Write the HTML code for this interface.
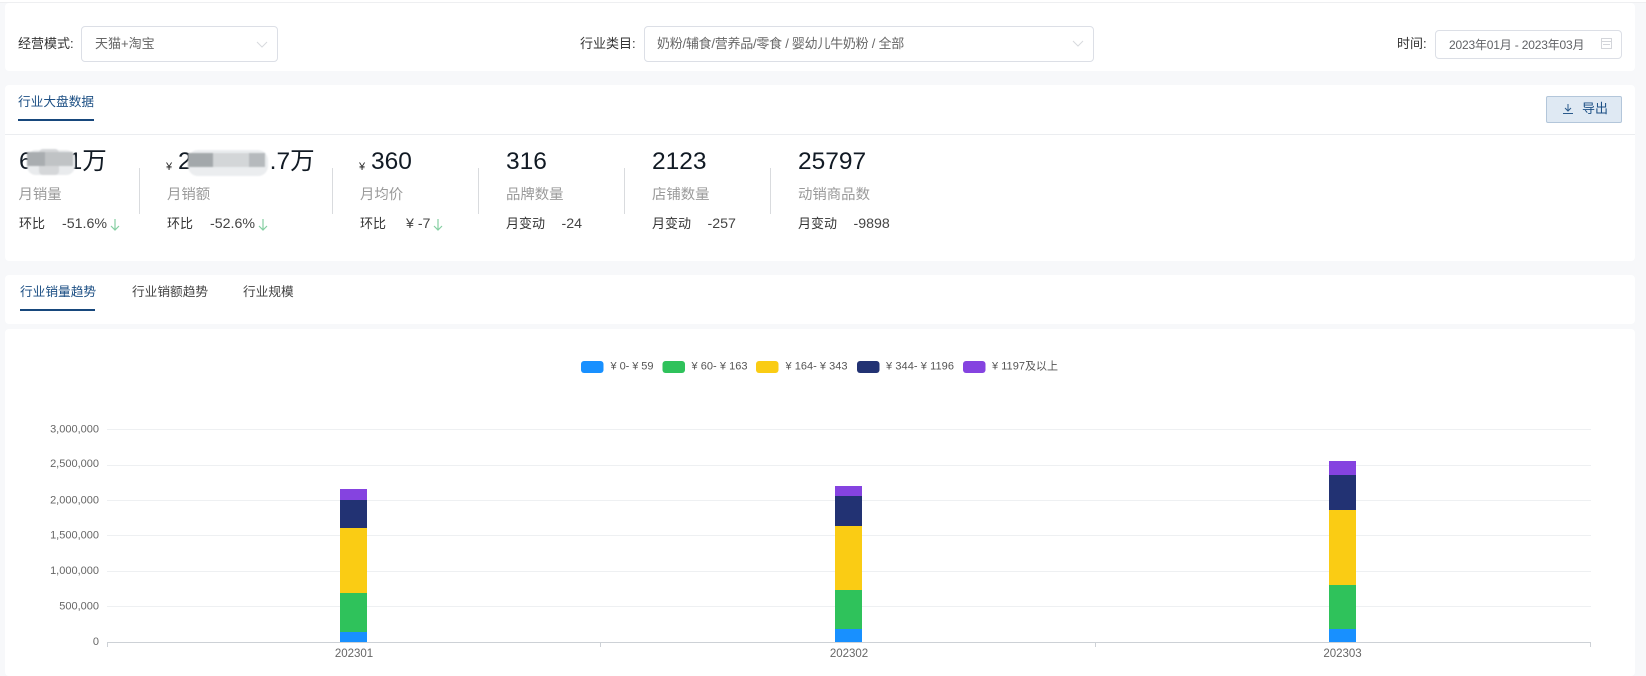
<!DOCTYPE html>
<html lang="zh"><head><meta charset="utf-8"><title>行业大盘数据</title>
<style>
html,body{margin:0;padding:0;background:#f7f8fa;}
body{width:1646px;height:676px;position:relative;overflow:hidden;font-family:"Liberation Sans","Noto Sans CJK SC",sans-serif;color:#333;}
.a{position:absolute;white-space:nowrap;}
.card{position:absolute;background:#fff;border-radius:4px;}
.t{line-height:20px;font-size:12.7px;}
.box{position:absolute;background:#fff;border:1px solid #dcdfe6;border-radius:4px;box-sizing:border-box;}
.num{position:absolute;font-size:24.5px;line-height:30px;color:#111a24;white-space:nowrap;}
.lab{position:absolute;font-size:14.4px;line-height:20px;color:#9a9a9a;white-space:nowrap;}
.sm{position:absolute;font-size:13px;line-height:20px;color:#333;white-space:nowrap;}
.val{position:absolute;font-size:14.2px;line-height:20px;color:#444;white-space:nowrap;}
.div{position:absolute;top:168px;width:1px;height:46px;background:#d9dbde;}
.yen{position:absolute;font-size:11px;line-height:14px;color:#222;}
.blk{position:absolute;}
.mosaic{position:absolute;filter:blur(.7px);}
</style></head><body>
<div class="a" style="left:0;top:0;width:1646px;height:3px;background:#fff;border-bottom:1px solid #eeeff1;box-sizing:border-box"></div>

<div class="card" style="left:5px;top:3px;width:1630px;height:68px"></div>
<div class="card" style="left:5px;top:85px;width:1630px;height:176px"></div>
<div class="card" style="left:5px;top:275px;width:1630px;height:49px"></div>
<div class="card" style="left:5px;top:329px;width:1630px;height:347px"></div>

<!-- filters -->
<div class="a t" style="left:18px;top:34px;color:#333;font-size:13px">经营模式:</div>
<div class="box" style="left:81px;top:26px;width:197px;height:36px"></div>
<div class="a t" style="left:95px;top:34px;color:#666;font-size:13px">天猫+淘宝</div>
<svg class="a" style="left:255px;top:40px" width="14" height="9" viewBox="0 0 14 9"><path d="M2 2l5 5 5-5" fill="none" stroke="#d8dade" stroke-width="1"/></svg>

<div class="a t" style="left:580px;top:34px;color:#333;font-size:13px">行业类目:</div>
<div class="box" style="left:644px;top:26px;width:450px;height:36px"></div>
<div class="a t" style="left:657px;top:34px;color:#666;font-size:13px;letter-spacing:-.25px">奶粉/辅食/营养品/零食 / 婴幼儿牛奶粉 / 全部</div>
<svg class="a" style="left:1071px;top:39px" width="14" height="9" viewBox="0 0 14 9"><path d="M2 2l5 5 5-5" fill="none" stroke="#d8dade" stroke-width="1"/></svg>

<div class="a t" style="left:1397px;top:34px;color:#333;font-size:13px">时间:</div>
<div class="box" style="left:1435px;top:30px;width:187px;height:29px"></div>
<div class="a" style="left:1449px;top:35px;font-size:12px;line-height:20px;color:#606266;letter-spacing:-.18px">2023年01月 - 2023年03月</div>
<svg class="a" style="left:1600px;top:37px" width="13" height="13" viewBox="0 0 13 13"><path d="M1.500 1.500h10v10h-10zM1.500 4.500h10M3 7.500h7" fill="none" stroke="#d3d5da" stroke-width="1"/></svg>

<!-- section 2 -->
<div class="a t" style="left:18px;top:92px;color:#1c4f84">行业大盘数据</div>
<div class="a" style="left:18px;top:119px;width:76px;height:2px;background:#17477c"></div>
<div class="a" style="left:5px;top:134px;width:1630px;height:1px;background:#ebedf0"></div>
<div class="a" style="left:1546px;top:96px;width:76px;height:27px;box-sizing:border-box;background:#dfe9f3;border:1px solid #b3c6da;border-radius:2px"></div>
<svg class="a" style="left:1562px;top:103px" width="12" height="12" viewBox="0 0 12 12"><path d="M6 1v6.500M3 5l3 3 3-3M1 10.500h10" fill="none" stroke="#2a5a8c" stroke-width="1"/></svg>
<div class="a t" style="left:1582px;top:99px;color:#1c4f84;font-size:13px">导出</div>

<!-- stats -->
<div class="num" style="left:19px;top:147px">6<span style="margin-left:36px">1万</span></div>
<div class="mosaic" style="left:27px;top:149px;width:48px;height:26px">
<div class="blk" style="left:0;top:1px;width:48px;height:25px;background:#e9ebed;border-radius:9px"></div>
<div class="blk" style="left:12px;top:0;width:20px;height:26px;background:#d5d7d9;border-radius:4px"></div>
<div class="blk" style="left:0;top:3px;width:18px;height:14px;background:#a9adb0"></div>
<div class="blk" style="left:18px;top:3px;width:28px;height:14px;background:#c0c3c5"></div>
</div>
<div class="lab" style="left:18.500px;top:185px">月销量</div>
<div class="sm" style="left:19px;top:214px">环比</div>
<div class="val" style="left:62px;top:214px">-51.6%</div>
<svg class="a" style="left:109px;top:218px" width="12" height="14" viewBox="0 0 12 14"><path d="M6 1v11M2 8l4 4 4-4" fill="none" stroke="#85cfa2" stroke-width="1.200"/></svg>
<div class="div" style="left:139px"></div>

<div class="yen" style="left:166px;top:160px">¥</div>
<div class="num" style="left:178px;top:147px">2<span style="margin-left:78px">.7万</span></div>
<div class="mosaic" style="left:188px;top:150px;width:80px;height:26px">
<div class="blk" style="left:0;top:0;width:80px;height:26px;background:#ebedef;border-radius:10px"></div>
<div class="blk" style="left:0;top:3px;width:25px;height:14px;background:#a3a8ab"></div>
<div class="blk" style="left:25px;top:3px;width:37px;height:14px;background:#d3d6d8"></div>
<div class="blk" style="left:61px;top:3px;width:16px;height:14px;background:#b6babd"></div>
</div>
<div class="lab" style="left:167px;top:185px">月销额</div>
<div class="sm" style="left:167px;top:214px">环比</div>
<div class="val" style="left:210px;top:214px">-52.6%</div>
<svg class="a" style="left:257px;top:218px" width="12" height="14" viewBox="0 0 12 14"><path d="M6 1v11M2 8l4 4 4-4" fill="none" stroke="#85cfa2" stroke-width="1.200"/></svg>
<div class="div" style="left:332px"></div>

<div class="yen" style="left:359px;top:160px">¥</div>
<div class="num" style="left:371px;top:147px">360</div>
<div class="lab" style="left:360px;top:185px">月均价</div>
<div class="sm" style="left:360px;top:214px">环比</div>
<div class="val" style="left:406px;top:214px">¥ -7</div>
<svg class="a" style="left:432px;top:218px" width="12" height="14" viewBox="0 0 12 14"><path d="M6 1v11M2 8l4 4 4-4" fill="none" stroke="#85cfa2" stroke-width="1.200"/></svg>
<div class="div" style="left:478px"></div>

<div class="num" style="left:506px;top:147px">316</div>
<div class="lab" style="left:506px;top:185px">品牌数量</div>
<div class="sm" style="left:506px;top:214px">月变动</div>
<div class="val" style="left:561.500px;top:214px">-24</div>
<div class="div" style="left:624px"></div>

<div class="num" style="left:652px;top:147px">2123</div>
<div class="lab" style="left:652px;top:185px">店铺数量</div>
<div class="sm" style="left:652px;top:214px">月变动</div>
<div class="val" style="left:707.500px;top:214px">-257</div>
<div class="div" style="left:770px"></div>

<div class="num" style="left:798px;top:147px">25797</div>
<div class="lab" style="left:798px;top:185px">动销商品数</div>
<div class="sm" style="left:798px;top:214px">月变动</div>
<div class="val" style="left:853.500px;top:214px">-9898</div>

<!-- tabs -->
<div class="a t" style="left:20px;top:282px;color:#1c4f84">行业销量趋势</div>
<div class="a" style="left:20px;top:309px;width:75px;height:2px;background:#17477c"></div>
<div class="a t" style="left:132px;top:282px;color:#444">行业销额趋势</div>
<div class="a t" style="left:243px;top:282px;color:#444">行业规模</div>

<!-- chart -->
<svg class="a" style="left:0;top:329px" width="1646" height="347" viewBox="0 329 1646 347" font-family="Liberation Sans, Noto Sans CJK SC, sans-serif" font-size="11" fill="#666">
<g fill="none" stroke="#eef0f2" stroke-width="1">
<path d="M107 429.500H1591M107 465.500H1591M107 500.500H1591M107 535.500H1591M107 571.500H1591M107 606.500H1591"/>
</g>
<path d="M107 642.500H1591M107.500 642v5M600.500 642v5M1095.500 642v5M1590.500 642v5" fill="none" stroke="#cdd1d6" stroke-width="1"/>
<g text-anchor="end">
<text x="99" y="432.500">3,000,000</text><text x="99" y="467">2,500,000</text><text x="99" y="503.500">2,000,000</text><text x="99" y="538.500">1,500,000</text><text x="99" y="574">1,000,000</text><text x="99" y="609.500">500,000</text><text x="99" y="645">0</text>
</g>
<g text-anchor="middle" font-size="11.500">
<text x="354" y="657">202301</text><text x="849" y="657">202302</text><text x="1342.500" y="657">202303</text>
</g>
<g>
<rect x="340" y="489" width="27" height="11" fill="#8543e0"/><rect x="340" y="500" width="27" height="28" fill="#223273"/><rect x="340" y="528" width="27" height="65" fill="#facc14"/><rect x="340" y="593" width="27" height="39" fill="#2fc25b"/><rect x="340" y="632" width="27" height="10" fill="#1890ff"/>
<rect x="835" y="486" width="27" height="10" fill="#8543e0"/><rect x="835" y="496" width="27" height="30" fill="#223273"/><rect x="835" y="526" width="27" height="64" fill="#facc14"/><rect x="835" y="590" width="27" height="39" fill="#2fc25b"/><rect x="835" y="629" width="27" height="13" fill="#1890ff"/>
<rect x="1329" y="461" width="27" height="14" fill="#8543e0"/><rect x="1329" y="475" width="27" height="35" fill="#223273"/><rect x="1329" y="510" width="27" height="75" fill="#facc14"/><rect x="1329" y="585" width="27" height="44" fill="#2fc25b"/><rect x="1329" y="629" width="27" height="13" fill="#1890ff"/>
</g>
<rect x="581" y="361" width="22.500" height="12" rx="3" fill="#1890ff"/><text x="610.500" y="369.500" fill="#555" textLength="43">¥ 0- ¥ 59</text>
<rect x="662.500" y="361" width="22.500" height="12" rx="3" fill="#2fc25b"/><text x="691.500" y="369.500" fill="#555" textLength="56">¥ 60- ¥ 163</text>
<rect x="756" y="361" width="22.500" height="12" rx="3" fill="#facc14"/><text x="785.500" y="369.500" fill="#555" textLength="62">¥ 164- ¥ 343</text>
<rect x="857" y="361" width="22.500" height="12" rx="3" fill="#223273"/><text x="886" y="369.500" fill="#555" textLength="68">¥ 344- ¥ 1196</text>
<rect x="963" y="361" width="22.500" height="12" rx="3" fill="#8543e0"/><text x="992" y="369.500" fill="#555" textLength="66">¥ 1197及以上</text>
</svg>
</body></html>
